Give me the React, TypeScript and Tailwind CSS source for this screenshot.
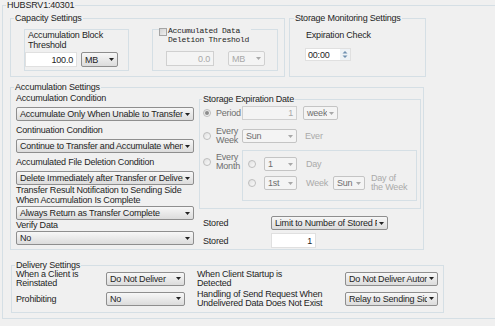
const line = "border border-[#d5dfe5]";

type ComboProps = { text: string; className?: string; disabled?: boolean; dim?: boolean };

function Combo({ text, className = "", disabled = false, dim = false }: ComboProps) {
  let tone = "border-[#8e8e8e] bg-linear-to-b from-[#f7f7f7] to-[#dcdcdc] text-[#1e1e1e]";
  if (disabled) tone = "border-[#c4c4c4] bg-[#f4f4f4] text-[#6d6d6d]";
  if (dim) tone = "border-[#d0d0d0] bg-[#f4f4f4] text-[#a8a8a8]";

  return (
    <div className={`flex shrink-0 items-center overflow-hidden rounded-[2px] border ${tone} ${className}`}>
      <span className="mr-[2px] min-w-0 flex-1 overflow-hidden whitespace-nowrap pl-[3px]">{text}</span>
      <svg width="5" height="3" viewBox="0 0 5 3" className="mr-[3px] shrink-0">
        <path d="M0 0h5L2.5 3z" fill={disabled || dim ? "#a8a8a8" : "#222"} />
      </svg>
    </div>
  );
}

function Field({ text, className = "", dim = false }: { text: string; className?: string; dim?: boolean }) {
  const tone = dim
    ? "border-[#d0d0d0] bg-[#f4f4f4] text-[#a8a8a8]"
    : "border-[#e0e0e0] bg-white text-[#1e1e1e]";
  return (
    <div className={`flex shrink-0 items-center justify-end border pr-[3px] ${tone} ${className}`}>
      {text}
    </div>
  );
}

function Radio({ checked = false, className = "" }: { checked?: boolean; className?: string }) {
  return (
    <span
      className={`flex h-[8px] w-[8px] shrink-0 items-center justify-center rounded-full border border-[#bdbdbd] bg-linear-to-br from-[#e0e0e0] to-[#fafafa] ${className}`}
    >
      {checked && <span className="h-[4px] w-[4px] rounded-full bg-[#8c8c8c]" />}
    </span>
  );
}

export default function App() {
  return (
    <div className="h-[326px] w-[495px] overflow-hidden bg-[#f0f0f0] pl-[2px] font-['Liberation_Sans',Arial,sans-serif] text-[9px] leading-[10px] tracking-[-0.2px] text-[#1e1e1e]">
      <fieldset className={`h-[319px] w-[500px] ${line}`}>
        <legend className="ml-[3px] px-[1px]">HUBSRV1:40301</legend>

        {/* capacity + storage monitoring */}
        <div className="mt-[3px] flex">
          <fieldset className={`ml-[7px] h-[64px] w-[275px] ${line}`}>
            <legend className="ml-[3px] px-[1px]">Capacity Settings</legend>
            <div className="mt-[6px] flex">
              <div className={`ml-[13px] h-[42px] w-[105px] ${line}`}>
                <div className="pl-[3px]">
                  Accumulation Block
                  <br />
                  Threshold
                </div>
                <div className="mt-[2px] flex">
                  <Field text="100.0" className="h-[15px] w-[52px]" />
                  <Combo text="MB" className="ml-[4px] h-[15px] w-[37px]" />
                </div>
              </div>

              <div className={`ml-[23px] h-[42px] w-[126px] ${line}`}>
                <div className="ml-[6px] -mt-[3px] flex w-fit items-start bg-[#f0f0f0] pr-[2px]">
                  <span className="mt-[1px] h-[8px] w-[8px] shrink-0 border border-[#a4a4a4] bg-linear-to-br from-[#d4d4d4] to-[#efefef]" />
                  <div className="ml-[1px] font-['Liberation_Mono',monospace] text-[8px] leading-[8.5px] tracking-[-0.3px]">
                    Accumulated Data
                    <br />
                    Deletion Threshold
                  </div>
                </div>
                <div className="ml-[13px] mt-[7px] flex">
                  <Field text="0.0" dim className="h-[15px] w-[48px]" />
                  <Combo text="MB" dim className="ml-[14px] h-[15px] w-[37px]" />
                </div>
              </div>
            </div>
          </fieldset>

          <fieldset className={`ml-[4px] h-[64px] w-[137px] ${line}`}>
            <legend className="ml-[4px] px-[1px]">Storage Monitoring Settings</legend>
            <div className="ml-[16px] mt-[7px]">Expiration Check</div>
            <div className="ml-[15px] mt-[8px] flex h-[13px] w-[46px] items-center border border-[#e0e0e0] bg-white">
              <span className="flex-1 pl-[2px]">00:00</span>
              <svg width="10" height="11" viewBox="0 0 10 11" className="shrink-0">
                <rect x="0" y="0" width="10" height="11" fill="#eef2f6" />
                <path d="M2.5 4.5h5L5 2z" fill="#6f8fb0" />
                <path d="M2.5 6.5h5L5 9z" fill="#6f8fb0" />
              </svg>
            </div>
          </fieldset>
        </div>

        {/* accumulation */}
        <fieldset className={`ml-[7px] mt-[5px] h-[168px] w-[414px] ${line}`}>
          <legend className="ml-[3px] px-[1px]">Accumulation Settings</legend>
          <div className="flex">
            <div className="ml-[5px] w-[178px]">
              <div className="mt-[1px]">Accumulation Condition</div>
              <Combo text="Accumulate Only When Unable to Transfer" className="mt-[4px] h-[14px] w-[178px]" />
              <div className="mt-[4px]">Continuation Condition</div>
              <Combo text="Continue to Transfer and Accumulate when" className="mt-[4px] h-[14px] w-[178px]" />
              <div className="mt-[4px]">Accumulated File Deletion Condition</div>
              <Combo text="Delete Immediately after Transfer or Delivery" className="mt-[4px] h-[14px] w-[178px]" />
              <div className="mt-[1px] leading-[9.5px]">
                Transfer Result Notification to Sending Side
                <br />
                When Accumulation Is Complete
              </div>
              <Combo text="Always Return as Transfer Complete" className="mt-[1px] h-[14px] w-[178px]" />
              <div>Verify Data</div>
              <Combo text="No" className="mt-[1px] h-[14px] w-[178px]" />
            </div>

            <div className="ml-[5px] w-[222px]">
              <fieldset className={`mt-[2px] h-[115px] w-[222px] ${line}`}>
                <legend className="ml-[2px] px-[1px]">Storage Expiration Date</legend>

                <div className="mt-[2px] flex h-[14px] items-center">
                  <Radio checked className="ml-[3px]" />
                  <span className="ml-[5px] w-[26px] text-[#6e6e6e]">Period</span>
                  <Field text="1" dim className="h-[14px] w-[55px]" />
                  <Combo text="week" disabled className="ml-[6px] h-[14px] w-[35px]" />
                </div>

                <div className="mt-[7px] flex h-[18px] items-center">
                  <Radio className="ml-[3px]" />
                  <span className="ml-[5px] w-[26px] leading-[9px] text-[#6e6e6e]">
                    Every
                    <br />
                    Week
                  </span>
                  <Combo text="Sun" disabled className="h-[14px] w-[55px]" />
                  <span className="ml-[8px] text-[#aaaaaa]">Ever</span>
                </div>

                <div className="mt-[5px] flex items-start">
                  <Radio className="ml-[3px] mt-[8px]" />
                  <span className="ml-[5px] mt-[3px] w-[26px] leading-[9px] text-[#6e6e6e]">
                    Every
                    <br />
                    Month
                  </span>
                  <div className={`h-[51px] w-[175px] ${line}`}>
                    <div className="mt-[6px] flex h-[14px] items-center">
                      <Radio className="ml-[5px]" />
                      <Combo text="1" disabled className="ml-[8px] h-[14px] w-[33px]" />
                      <span className="ml-[9px] text-[#aaaaaa]">Day</span>
                    </div>
                    <div className="mt-[5px] flex h-[14px] items-center">
                      <Radio className="ml-[5px]" />
                      <Combo text="1st" disabled className="ml-[8px] h-[14px] w-[33px]" />
                      <span className="ml-[9px] w-[27px] text-[#aaaaaa]">Week</span>
                      <Combo text="Sun" disabled className="h-[14px] w-[32px]" />
                      <span className="ml-[6px] leading-[9px] text-[#aaaaaa]">
                        Day of
                        <br />
                        the Week
                      </span>
                    </div>
                  </div>
                </div>
              </fieldset>

              <div className="mt-[7px] flex h-[14px] items-center">
                <span className="ml-[4px] w-[68px]">Stored</span>
                <Combo text="Limit to Number of Stored Files" className="h-[14px] w-[117px]" />
              </div>
              <div className="mt-[3px] flex h-[15px] items-center">
                <span className="ml-[4px] w-[68px]">Stored</span>
                <Field text="1" className="h-[15px] w-[45px]" />
              </div>
            </div>
          </div>
        </fieldset>

        {/* delivery */}
        <fieldset className={`ml-[8px] mt-[10px] h-[53px] w-[433px] ${line}`}>
          <legend className="ml-[3px] px-[1px]">Delivery Settings</legend>
          <div className="flex h-[17px] items-center">
            <span className="ml-[4px] w-[90px] leading-[8.5px]">
              When a Client is
              <br />
              Reinstated
            </span>
            <Combo text="Do Not Deliver" className="h-[14px] w-[79px]" />
            <span className="ml-[12px] w-[148px] leading-[8.5px]">
              When Client Startup is
              <br />
              Detected
            </span>
            <Combo text="Do Not Deliver Automatically" className="h-[14px] w-[93px]" />
          </div>
          <div className="mt-[3px] flex h-[17px] items-center">
            <span className="ml-[4px] w-[90px]">Prohibiting</span>
            <Combo text="No" className="h-[14px] w-[79px]" />
            <span className="ml-[12px] w-[148px] leading-[8.5px]">
              Handling of Send Request When
              <br />
              Undelivered Data Does Not Exist
            </span>
            <Combo text="Relay to Sending Side" className="h-[14px] w-[93px]" />
          </div>
        </fieldset>
      </fieldset>
    </div>
  );
}
